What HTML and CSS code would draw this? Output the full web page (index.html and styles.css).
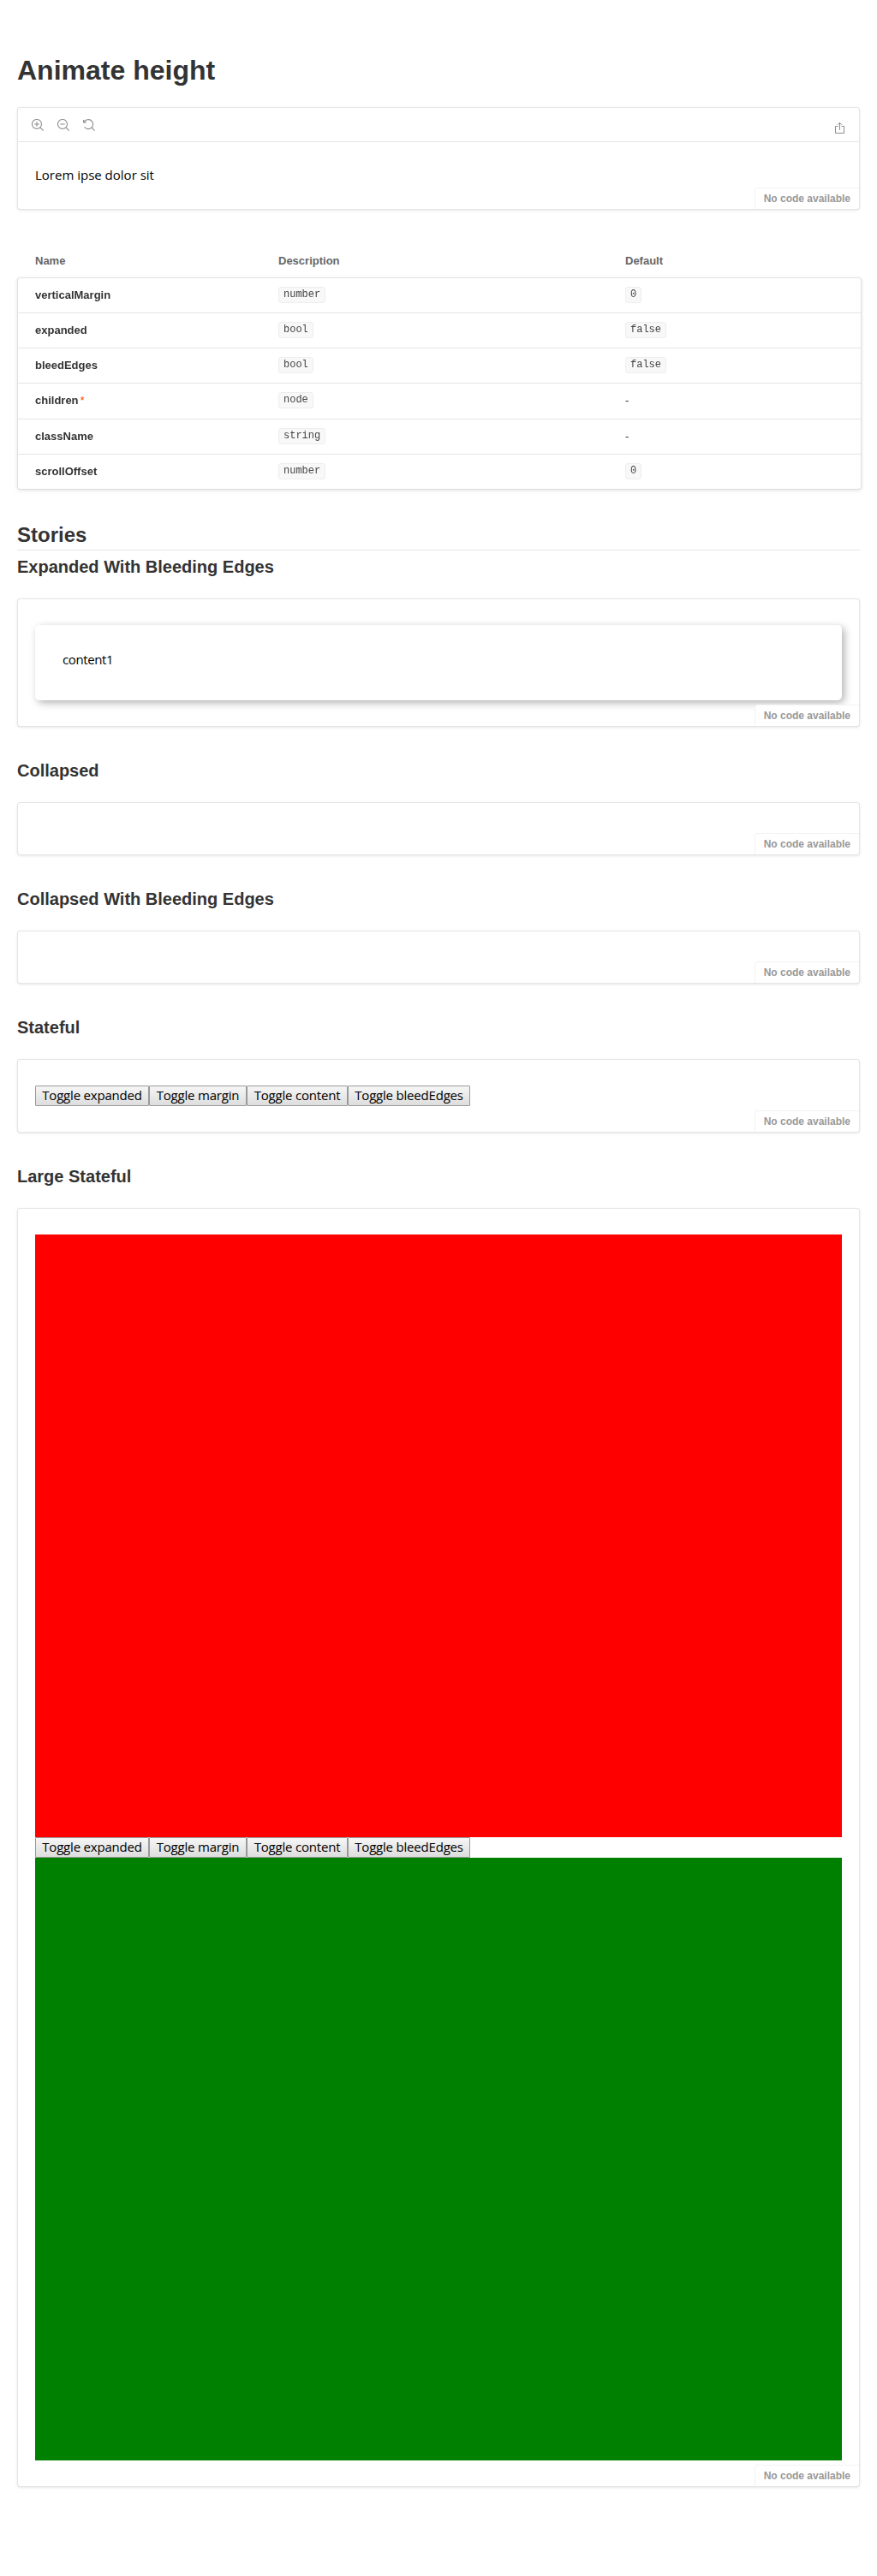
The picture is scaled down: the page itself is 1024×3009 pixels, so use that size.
FILE: index.html
```html
<!DOCTYPE html>
<html lang="en">
<head>
<meta charset="utf-8">
<title>Animate height</title>
<link rel="stylesheet" href="styles.css">
</head>
<body>
<main class="docs">
  <h1 class="title">Animate height</h1>
  <section class="card primary">
    <div class="toolbar">
      <div class="tools">
        <svg class="icon" viewBox="0 0 14 14"><circle cx="6" cy="6" r="5.5"/><path d="M9.9 9.9l3.7 3.7M3.3 6h5.4M6 3.3v5.4"/></svg>
        <svg class="icon" viewBox="0 0 14 14"><circle cx="6" cy="6" r="5.5"/><path d="M9.9 9.9l3.7 3.7M3.3 6h5.4"/></svg>
        <svg class="icon" viewBox="0 0 14 14"><path d="M1.2 3.6A5.5 5.5 0 1 1 1.5 9.2M.6 1v2.9h3M9.9 9.9l3.7 3.7"/></svg>
      </div>
      <svg class="icon share" viewBox="0 0 14 14"><path d="M4.5 5.5h-3v8h10v-8h-3M6.5 10V1.5M4.2 3.7L6.5 1.3l2.3 2.4"/></svg>
    </div>
    <div class="story"><p class="text lorem">Lorem ipse dolor sit</p></div>
    <span class="code-label">No code available</span>
  </section>

  <table class="args">
    <thead><tr><th class="c-name">Name</th><th class="c-desc">Description</th><th>Default</th></tr></thead>
    <tbody>
      <tr><td>verticalMargin</td><td><code>number</code></td><td><code>0</code></td></tr>
      <tr><td>expanded</td><td><code>bool</code></td><td><code>false</code></td></tr>
      <tr><td>bleedEdges</td><td><code>bool</code></td><td><code>false</code></td></tr>
      <tr class="tall"><td>children<span class="required">*</span></td><td><code>node</code></td><td>-</td></tr>
      <tr><td>className</td><td><code>string</code></td><td>-</td></tr>
      <tr><td>scrollOffset</td><td><code>number</code></td><td><code>0</code></td></tr>
    </tbody>
  </table>

  <h2 class="stories">Stories</h2>
  <h3 class="name first">Expanded With Bleeding Edges</h3>
  <section class="card">
    <div class="story"><div class="panel"><p class="text content">content1</p></div></div>
    <span class="code-label">No code available</span>
  </section>
  <h3 class="name">Collapsed</h3>
  <section class="card"><div class="story"></div><span class="code-label">No code available</span></section>
  <h3 class="name">Collapsed With Bleeding Edges</h3>
  <section class="card"><div class="story"></div><span class="code-label">No code available</span></section>
  <h3 class="name">Stateful</h3>
  <section class="card">
    <div class="story">
      <div class="buttons"><button class="b1">Toggle expanded</button><button class="b2">Toggle margin</button><button class="b3">Toggle content</button><button class="b4">Toggle bleedEdges</button></div>
    </div>
    <span class="code-label">No code available</span>
  </section>
  <h3 class="name">Large Stateful</h3>
  <section class="card">
    <div class="story">
      <div class="block red"></div>
      <div class="buttons"><button class="b1">Toggle expanded</button><button class="b2">Toggle margin</button><button class="b3">Toggle content</button><button class="b4">Toggle bleedEdges</button></div>
      <div class="block green"></div>
    </div>
    <span class="code-label">No code available</span>
  </section>
</main>
</body>
</html>
```
FILE: styles.css
```css
* { box-sizing: border-box; }
body { margin: 0; background: #fff; color: #333; font-family: "Liberation Sans", Arial, sans-serif; }
h1, h2, h3, p { margin: 0; }
.docs { padding: 64px 20px 104px; }
.title { font-size: 32px; line-height: 36px; margin-bottom: 25px; }
.card { position: relative; border: 1px solid rgba(0,0,0,.1); border-radius: 4px; box-shadow: 0 1px 3px rgba(0,0,0,.1); background: #fff; }
.toolbar { height: 40px; padding: 13px 15px 0 15.6px; display: flex; justify-content: space-between; align-items: flex-start; border-bottom: 1px solid rgba(0,0,0,.1); }
.tools { display: flex; gap: 16px; }
.icon { width: 14px; height: 14px; fill: none; stroke: #8c8c8c; stroke-width: 1.1; display: block; }
.share { margin-top: 3px; stroke-width: 1; }
.story { padding: 30px 20px; }
.text { height: 18px; font: 15px/16px "Open Sans", "Noto Sans", sans-serif; color: #000; }
.code-label { position: absolute; right: 0; bottom: 0; padding: 4px 10px; border: 1px solid rgba(0,0,0,.05); border-width: 1px 0 0 1px; border-radius: 4px 0 4px 0; background: #fff; color: #999; font-size: 12px; line-height: 16px; font-weight: 700; }

.args { width: 986px; margin-top: 40px; border-collapse: separate; border-spacing: 0; table-layout: fixed; font-size: 13px; line-height: 20px; }
.args th { height: 39px; padding: 0 20px 0; text-align: left; vertical-align: middle; color: #666; }
.args .c-name { width: 285px; padding-left: 21px; }
.args .c-desc { width: 405px; }
.args td { height: 41px; padding: 10px 20px; vertical-align: top; border-top: 1px solid #e4e4e4; background: #fff; line-height: 20px; }
.args td:first-child { padding-left: 20px; font-weight: 700; border-left: 1px solid #e0e0e0; }
.args td:last-child { border-right: 1px solid #e0e0e0; }
.args .tall td { height: 42px; }
.args tbody tr:last-child td { border-bottom: 1px solid #dcdcdc; height: 42px; }
.args tbody { filter: drop-shadow(0 1px 2px rgba(0,0,0,.1)); }
.args tr:first-child td:first-child { border-top-left-radius: 4px; }
.args tr:first-child td:last-child { border-top-right-radius: 4px; }
.args tr:last-child td:first-child { border-bottom-left-radius: 4px; }
.args tr:last-child td:last-child { border-bottom-right-radius: 4px; }
.args code { display: inline-block; vertical-align: top; height: 19px; padding: 0 5px; border: 1px solid #eee; border-radius: 3px; background: #f8f8f8; color: #444; font: 12px/16px "Liberation Mono", monospace; }
.required { color: #ff4400; font-weight: 400; margin-left: 2px; }

.stories { margin-top: 36px; height: 35px; border-bottom: 1px solid rgba(0,0,0,.1); font-size: 24px; line-height: 34px; }
.name { padding-top: 39px; height: 88px; font-size: 20px; line-height: 24px; }
.name.first { padding-top: 7px; height: 56px; }
.panel { height: 88px; padding: 32px; border-radius: 5px; background: #fff; box-shadow: 3px 3px 10px rgba(0,0,0,.3); }
.content { letter-spacing: -.4px; }
.buttons { display: flex; height: 24px; }
.buttons button { height: 24px; padding: 0 0 2px; border: 1px solid #999; border-radius: 1px; background: linear-gradient(#f6f6f6, #ddd); font: 15px/20px "Open Sans", "Noto Sans", sans-serif; letter-spacing: -.2px; color: #000; white-space: nowrap; }
.buttons .b1 { width: 133px; }
.buttons .b2 { width: 114px; }
.buttons .b3 { width: 118px; }
.buttons .b4 { width: 143px; }
.block { height: 704px; }
.red { background: #f00; }
.green { background: #008000; }
```
